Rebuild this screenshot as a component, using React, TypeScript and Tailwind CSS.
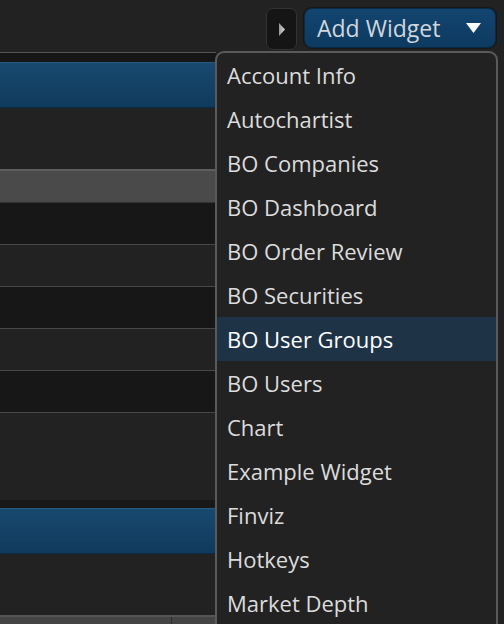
const widgets = [
  'Account Info',
  'Autochartist',
  'BO Companies',
  'BO Dashboard',
  'BO Order Review',
  'BO Securities',
  'BO User Groups',
  'BO Users',
  'Chart',
  'Example Widget',
  'Finviz',
  'Hotkeys',
  'Market Depth',
]

const active = 'BO User Groups'

function BlueBar() {
  return (
    <div className="h-[46px] border-t border-[#2a5a82] bg-gradient-to-b from-[#18496f] to-[#0f3a5c] shadow-[inset_0_-1px_0_#0b2c47]" />
  )
}

function Row({ dark }: { dark?: boolean }) {
  return <div className={`h-[42px] border-b border-[#484848] ${dark ? 'bg-[#171717]' : 'bg-[#222222]'}`} />
}

export default function App() {
  return (
    <div
      className="relative w-[504px] h-[624px] overflow-hidden bg-[#222222]"
      style={{ fontFamily: '"Open Sans", "Noto Sans", sans-serif' }}
    >
      {/* toolbar */}
      <div className="h-[52px] flex items-start justify-end gap-[7px] pt-[8px] pr-[8px]">
        <button className="w-[31px] h-[42px] rounded-[7px] bg-[#151515] border border-[#333] flex items-center justify-center">
          <svg width="8" height="15" viewBox="0 0 8 15">
            <defs>
              <linearGradient id="tri" x1="0" y1="0" x2="1" y2="0">
                <stop offset="0" stopColor="#9a9a9a" />
                <stop offset="1" stopColor="#d8d8d8" />
              </linearGradient>
            </defs>
            <path d="M1 1 L7 7.5 L1 14 Z" fill="url(#tri)" />
          </svg>
        </button>
        <button className="w-[192px] h-[40px] rounded-[8px] bg-gradient-to-b from-[#124570] to-[#0d3a60] border border-[#0a2a45] flex items-center justify-between pl-[12px] pr-[14px] shadow-[0_0_0_1px_#161616]">
          <span className="text-[23px] leading-none text-[#d2d6da] pt-[1px]">Add Widget</span>
          <svg width="15" height="10" viewBox="0 0 15 10">
            <path d="M0 0 H15 L7.5 10 Z" fill="#ffffff" />
          </svg>
        </button>
      </div>

      {/* left panel */}
      <div className="w-[216px] border-t border-[#555]">
        <div className="h-[9px] bg-[#161616]" />
        <BlueBar />
        <div className="h-[61px] bg-[#222222]" />
        <div className="h-[34px] border-t-2 border-[#5e5e5e] bg-[#4a4a4a] border-b border-b-[#333]" />
        <Row dark />
        <Row />
        <Row dark />
        <Row />
        <Row dark />
        <div className="h-[87px] bg-[#222222]" />
        <div className="h-[8px] bg-[#181818]" />
        <BlueBar />
        <div className="h-[61px] bg-[#222222]" />
        <div className="h-[12px] border-t-2 border-[#555] bg-[#444] flex">
          <div className="w-[172px] border-r border-[#2a2a2a]" />
        </div>
      </div>

      {/* dropdown menu */}
      <div className="absolute left-[215px] top-[51px] w-[283px] h-[620px] rounded-t-[9px] border-2 border-[#5a5a5a] bg-[#222222]">
        {widgets.map((w) => (
          <div
            key={w}
            className={`h-[44px] flex items-center pl-[10px] text-[22px] leading-none ${
              w === active ? 'bg-[#1e3346] text-white' : 'text-[#dcdcdc]'
            }`}
          >
            {w}
          </div>
        ))}
      </div>
    </div>
  )
}
